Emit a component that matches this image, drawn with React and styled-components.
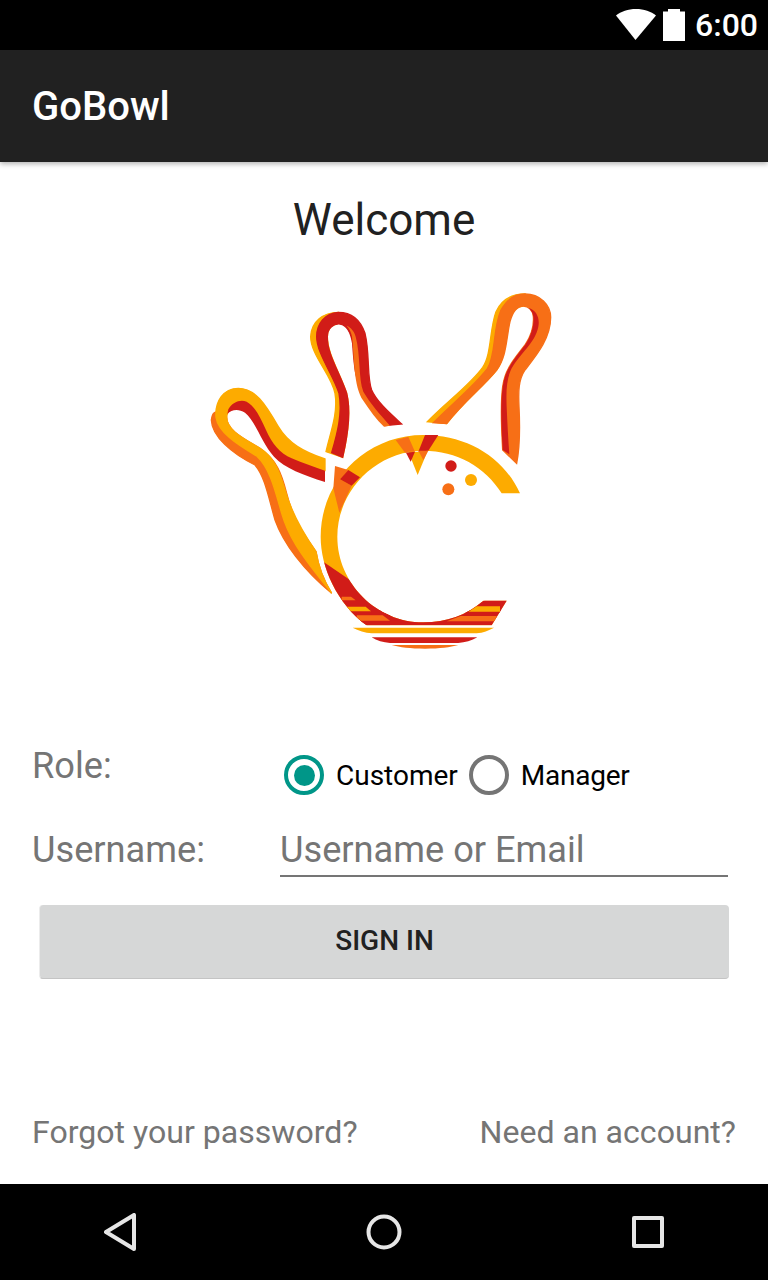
import React from 'react';
import styled, { createGlobalStyle } from 'styled-components';

const GlobalStyle = createGlobalStyle`
  html, body {
    margin: 0;
    padding: 0;
    background: #fff;
  }
  * {
    box-sizing: border-box;
  }
`;

const Screen = styled.div`
  width: 768px;
  height: 1280px;
  display: flex;
  flex-direction: column;
  overflow: hidden;
  background: #fff;
  font-family: Roboto, "Liberation Sans", sans-serif;
`;

const StatusBar = styled.div`
  height: 50px;
  flex: none;
  background: #000;
  display: flex;
  align-items: center;
  justify-content: flex-end;
  gap: 7px;
  padding-right: 10px;
`;

const StatusTime = styled.span`
  color: #fff;
  font-size: 32px;
  font-weight: 500;
  margin-left: 3px;
  line-height: 50px;
`;

const Toolbar = styled.div`
  height: 112px;
  flex: none;
  background: #212121;
  color: #fff;
  display: flex;
  align-items: center;
  padding-left: 32px;
  font-size: 40px;
  font-weight: 500;
  box-shadow: 0 2px 5px rgba(0, 0, 0, 0.3);
  position: relative;
`;

const Content = styled.div`
  flex: 1;
  display: flex;
  flex-direction: column;
`;

const Title = styled.h1`
  margin: 0;
  padding-top: 31px;
  height: 118px;
  text-align: center;
  font-size: 44px;
  font-weight: 400;
  line-height: 54px;
  color: #212121;
`;

const LogoWrap = styled.div`
  height: 380px;
  display: flex;
  justify-content: center;
  padding-right: 8px;
`;

const PinGroup = styled.g`
  stroke-width: 4;
  paint-order: stroke;

  path {
    stroke: ${(p) => p.$edge || 'none'};
  }
`;

const Row = styled.div`
  display: flex;
  padding-left: 32px;
  color: #757575;
  font-size: 36.2px;
`;

const RoleRow = styled(Row)`
  margin-top: 81px;
  height: 84px;
`;

const RowLabel = styled.label`
  width: ${(p) => p.$width}px;
  flex: none;
  line-height: 50px;
`;

const RadioGroup = styled.div`
  display: flex;
  align-items: center;
  height: 40px;
  margin-top: 14px;
`;

const RadioOption = styled.div`
  display: flex;
  align-items: center;
  color: #000;
  font-size: 28px;
  margin-right: 11px;
`;

const ManagerText = styled.span`
  letter-spacing: -0.25px;
`;

const RadioCircle = styled.span`
  width: 40px;
  height: 40px;
  border-radius: 50%;
  border: 4.5px solid ${(p) => (p.$checked ? '#009688' : '#757575')};
  margin-right: 12px;
  display: flex;
  align-items: center;
  justify-content: center;

  &::after {
    content: '';
    display: ${(p) => (p.$checked ? 'block' : 'none')};
    width: 21px;
    height: 21px;
    border-radius: 50%;
    background: #009688;
  }
`;

const UsernameInput = styled.div`
  width: 448px;
  height: 52px;
  border-bottom: 2px solid #757575;
  line-height: 50px;
`;

const SignInButton = styled.button`
  display: block;
  width: 690px;
  height: 74px;
  margin: 28px 0 0 39px;
  padding: 0 0 2px;
  border: 0;
  border-left: 1px solid #ececec;
  border-bottom: 1px solid #c4c4c4;
  border-radius: 4px;
  background: #d6d7d7;
  color: #212121;
  font-family: inherit;
  font-size: 28px;
  font-weight: 500;
`;

const FooterLinks = styled.div`
  margin-top: auto;
  display: flex;
  justify-content: space-between;
  padding: 0 32px 30px 32px;
  font-size: 32.1px;
  line-height: 44px;
  color: #757575;
`;

const NavBar = styled.div`
  height: 96px;
  flex: none;
  background: #000;
  display: flex;
  align-items: center;
  justify-content: space-between;
  padding: 0 104px 0 104px;
`;

const WifiIcon = () => (
  <svg width="40" height="32" viewBox="0 0 40 32">
    <path d="M0 6.5C5 2.500 12 0 20 0s15 2.500 20 6.500L19.500 31z" fill="#fff" />
  </svg>
);

const BatteryIcon = () => (
  <svg width="22" height="32" viewBox="0 0 22 32">
    <path d="M5 0h12v2.500h5V32H0V2.500h5z" fill="#fff" />
  </svg>
);

const AMBER = '#fdab00';
const ORANGE = '#f76f16';
const RED = '#d11c18';

const ringPath =
  'M990 640C940 530 830 465 700 465C530 465 392 600 392 770C392 860 440 970 530 1036H905L950 962H880C830 1005 770 1027 700 1027C560 1027 442 910 442 770C442 630 560 512 700 512C800 512 885 560 935 640Z';

const BowlingLogo = () => (
  <svg width="380" height="380" viewBox="0 0 1140 1140">
    <defs>
      <clipPath id="ring">
        <path d={ringPath} />
      </clipPath>
    </defs>

    {/* right pin */}
    <PinGroup $edge={AMBER}>
      <path
        d="M712 425C770 365 840 315 878 262C905 222 898 150 918 95C935 58 968 42 1005 42L1000 78C975 80 962 100 955 130C945 185 945 235 920 270C880 320 820 365 770 431Z"
        fill={AMBER}
      />
    </PinGroup>
    <PinGroup $edge={ORANGE}>
      <path
        d="M730 428C790 368 850 320 892 266C918 226 908 150 932 92C950 58 975 42 1005 42C1050 42 1082 75 1082 112C1082 175 1040 225 1005 270C985 300 985 335 987 380C990 440 990 500 980 550L938 510C935 450 930 380 938 320C945 265 975 235 1005 195C1025 165 1032 135 1030 110C1028 90 1015 78 1000 78C980 78 968 95 960 125C948 180 950 230 920 270C880 320 820 365 770 431Z"
        fill={ORANGE}
      />
    </PinGroup>
    <path
      d="M1015 84C1040 90 1050 115 1045 140C1035 190 990 220 965 265C950 295 948 330 950 380C952 430 955 480 958 523L938 510C935 450 930 380 938 320C945 265 975 235 1005 195C1025 165 1032 135 1030 110C1029 100 1023 90 1015 84Z"
      fill={RED}
    />

    {/* middle pin */}
    <PinGroup $edge={AMBER}>
      <path
        d="M408 515C420 460 445 400 435 340C425 285 362 225 362 170C364 125 400 97 445 97L440 132C420 135 412 150 412 170C412 220 450 280 470 340C485 400 470 480 458 532Z"
        fill={AMBER}
      />
    </PinGroup>
    <PinGroup $edge={RED}>
      <path
        d="M425 518L458 532C470 480 485 400 470 340C450 280 410 220 412 170C412 145 430 130 450 132C470 135 483 160 488 190C492 250 495 310 528 355C545 385 565 410 585 437L635 432C600 400 560 365 545 330C530 290 540 220 525 160C510 115 480 97 445 97C405 100 380 130 380 170C380 220 430 285 447 340C458 400 442 460 425 518Z"
        fill={RED}
      />
    </PinGroup>
    <path
      d="M486 170C493 230 490 320 520 362C540 392 560 420 582 440L600 437C572 405 540 370 520 335C505 295 512 225 497 170C494 155 480 140 470 137C478 145 484 158 486 170Z"
      fill={ORANGE}
    />

    {/* left pin */}
    <PinGroup $edge={ORANGE}>
      <path
        d="M64 420C66 470 125 520 195 555C225 590 235 650 255 720C280 790 340 870 425 940C400 900 385 860 378 815C340 760 310 720 290 640C275 580 260 540 210 505C160 475 108 450 110 410C70 380 66 405 64 420Z"
        fill={ORANGE}
      />
    </PinGroup>
    <PinGroup $edge={AMBER}>
      <path
        d="M405 537C340 515 295 490 265 440C225 370 195 325 145 325C100 325 74 365 78 412C85 455 135 490 200 528C240 565 255 630 275 700C295 770 335 825 378 880C405 915 415 925 425 940C400 900 385 860 378 815C340 760 305 700 285 630C268 570 250 530 210 505C160 475 108 450 110 410C115 380 135 362 160 368C185 375 205 415 220 450C235 490 260 520 300 540C335 555 370 570 405 572Z"
        fill={AMBER}
      />
    </PinGroup>
    <path
      d="M115 388C128 366 150 358 170 365C195 378 212 415 228 450C245 490 270 520 305 535C340 550 370 560 405 572V606C340 585 285 565 252 530C215 490 195 420 165 398C145 385 125 388 112 402Z"
      fill={RED}
    />

    {/* ball */}
    <path d={ringPath} fill={AMBER} />
    <g clipPath="url(#ring)">
      <path d="M385 835L480 900L600 1000V1040H385Z" fill={RED} />
      <rect x="385" y="990" width="600" height="50" fill={RED} />
      <path d="M770 1000H800L885 960H960V1000H770Z" fill={RED} />
      <path d="M455 950H483L497 961H455Z" fill={ORANGE} />
      <path d="M470 980H527L543 994H470Z" fill={AMBER} />
      <path d="M500 1006H578L600 1022H500Z" fill={ORANGE} />
      <path d="M860 979H930V995H835Z" fill={AMBER} />
      <path d="M812 1008H920V1024H770Z" fill={ORANGE} />
    </g>

    {/* pin shadows crossing the ball */}
    <path d="M435 558L475 570L450 598L485 617L448 698L430 625Z" fill={ORANGE} />
    <path d="M450 598L475 570L510 592L485 617Z" fill={RED} />
    <path d="M617 480L655 470L675 515L645 518Z" fill={ORANGE} />
    <path d="M705 465H745L715 512L685 515Z" fill={RED} />
    <path d="M655 515H712L683 585Z" fill={AMBER} />
    <path d="M648 518L675 515L662 545Z" fill={RED} />
    <path d="M685 512H715L700 540Z" fill={ORANGE} />

    {/* finger holes */}
    <circle cx="783" cy="558" r="17" fill={RED} />
    <circle cx="843" cy="600" r="18" fill={AMBER} />
    <circle cx="775" cy="628" r="18" fill={ORANGE} />

    {/* lane lines */}
    <path d="M488 1043H912C895 1052 880 1058 860 1060H545C525 1058 505 1052 488 1043Z" fill={AMBER} />
    <path d="M545 1072H862C845 1082 825 1088 805 1089H600C580 1088 560 1082 545 1072Z" fill={RED} />
    <path d="M605 1095H805C780 1102 750 1106 705 1106C660 1106 630 1102 605 1095Z" fill={ORANGE} />
  </svg>
);

const NavIcon = styled.svg`
  display: block;
  fill: none;
  stroke: #e6e6e6;
  stroke-width: 4;
  stroke-linejoin: round;
`;

const App = () => {
  return (
    <Screen>
      <GlobalStyle />
      <StatusBar>
        <WifiIcon />
        <BatteryIcon />
        <StatusTime>6:00</StatusTime>
      </StatusBar>
      <Toolbar>GoBowl</Toolbar>
      <Content>
        <Title>Welcome</Title>
        <LogoWrap>
          <BowlingLogo />
        </LogoWrap>
        <RoleRow>
          <RowLabel $width={252}>Role:</RowLabel>
          <RadioGroup>
            <RadioOption>
              <RadioCircle $checked />
              Customer
            </RadioOption>
            <RadioOption>
              <RadioCircle />
              <ManagerText>Manager</ManagerText>
            </RadioOption>
          </RadioGroup>
        </RoleRow>
        <Row>
          <RowLabel $width={248}>Username:</RowLabel>
          <UsernameInput>Username or Email</UsernameInput>
        </Row>
        <SignInButton>SIGN IN</SignInButton>
        <FooterLinks>
          <span>Forgot your password?</span>
          <span>Need an account?</span>
        </FooterLinks>
      </Content>
      <NavBar>
        <NavIcon width="32" height="38" viewBox="0 0 32 38">
          <path d="M30 2V36L2 19Z" />
        </NavIcon>
        <NavIcon width="36" height="36" viewBox="0 0 36 36">
          <circle cx="18" cy="18" r="15.500" />
        </NavIcon>
        <NavIcon width="32" height="32" viewBox="0 0 32 32">
          <rect x="2" y="2" width="28" height="28" />
        </NavIcon>
      </NavBar>
    </Screen>
  );
};

export default App;
